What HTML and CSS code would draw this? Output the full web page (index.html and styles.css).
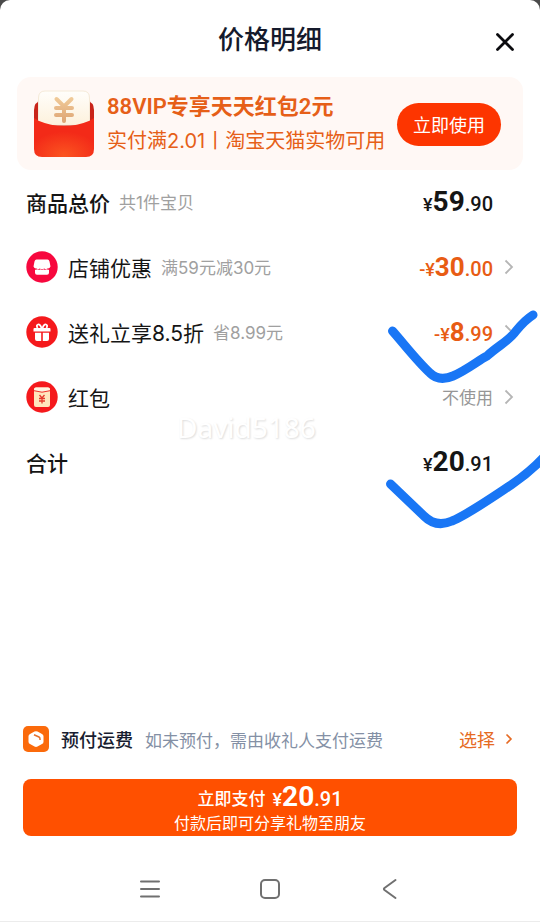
FILE: index.html
```html
<!DOCTYPE html>
<html lang="zh-CN">
<head>
<meta charset="utf-8">
<meta name="viewport" content="width=device-width, initial-scale=1">
<title>价格明细</title>
<link rel="stylesheet" href="styles.css">
</head>
<body>
<div class="sheet">
  <header class="header">
    <h1 class="title">价格明细</h1>
    <button class="close" type="button" aria-label="关闭">
      <svg width="20" height="20" viewBox="0 0 20 20"><path d="M2.500 2.500l15 15M17.500 2.500l-15 15" fill="none" stroke="#0b0b0f" stroke-width="2.800" stroke-linecap="round"/></svg>
    </button>
  </header>

  <section class="banner">
    <svg class="banner-icon" width="60" height="68" viewBox="0 0 60 68" aria-hidden="true">
      <defs>
        <radialGradient id="pocket" cx="50%" cy="95%" r="60%"><stop offset="0" stop-color="#fb5420"/><stop offset="1" stop-color="#f32a18"/></radialGradient>
        <linearGradient id="note" x1="0" y1="0" x2="0" y2="1"><stop offset="0" stop-color="#fffefb"/><stop offset="1" stop-color="#fdf1dc"/></linearGradient>
        <linearGradient id="yen" gradientUnits="userSpaceOnUse" x1="0" y1="8" x2="0" y2="33"><stop offset="0" stop-color="#f0ca98"/><stop offset="1" stop-color="#dda373"/></linearGradient>
      </defs>
      <path d="M0 20q0-8 8-10h44q8 2 8 10v18H0z" fill="#c9241a"/>
      <path d="M11 1h38q6.500 0 6.500 7v27H4.500V8q0-7 6.500-7z" fill="url(#note)" stroke="#f5ead8"/>
      <path d="M22.500 9L30 16.500 37.500 9M22 18h16M22 25h16M30 17v14" fill="none" stroke="url(#yen)" stroke-width="4" stroke-linecap="round"/>
      <path d="M0 28q4 2.500 4.500 2.700Q17 36 30 36t25.500-5.300L60 28v31q0 8-8 8H8q-8 0-8-8z" fill="url(#pocket)"/>
    </svg>
    <div class="banner-text">
      <strong class="banner-title">88VIP专享天天红包2元</strong>
      <span class="banner-sub">实付满2.01丨淘宝天猫实物可用</span>
    </div>
    <button class="use" type="button">立即使用</button>
  </section>

  <main class="list">
    <div class="row">
      <span class="name strong">商品总价</span><span class="note">共1件宝贝</span>
      <span class="price"><span class="yen">¥</span><b>59</b><span class="cents">.90</span></span>
      <span class="gap"></span>
    </div>
    <div class="row">
      <svg class="badge" width="32" height="32" viewBox="0 0 32 32" aria-hidden="true"><circle cx="16" cy="16" r="15.700" fill="#f7083e"/><path d="M10.500 8.500h11q1.500 0 2 2l1 5q-1 2.500-3.200 2-1.500 1.500-3 0-2.300 1.500-4.600 0-1.500 1.500-3 0-2.200.5-3.200-2l1-5q.5-2 2-2z" fill="#fff"/><path d="M9 18.700q1.500.3 2.500-.4 1.500 1 3 0 1.500 1 3 0 1.500 1 3 0 1 .7 2.500.4v3q0 2-2 2H11q-2 0-2-2z" fill="#fff"/></svg>
      <span class="name">店铺优惠</span><span class="note">满59元减30元</span>
      <span class="price off"><span class="yen">-¥</span><b>30</b><span class="cents">.00</span></span>
      <svg class="chevron" width="10" height="16" viewBox="0 0 10 16" aria-hidden="true"><path d="M1.500 1.500L8 8l-6.500 6.500"/></svg>
    </div>
    <div class="row">
      <svg class="badge" width="32" height="32" viewBox="0 0 32 32" aria-hidden="true"><circle cx="16" cy="16" r="15.700" fill="#f5191c"/><path d="M8.500 12h15q1 0 1 1v2.500h-17V13q0-1 1-1zM9 16.800h6.200V25H11q-2 0-2-2zM16.800 16.800H23V23q0 2-2 2h-4.200z" fill="#fff"/><path d="M15.500 12q-1.500-4-3.500-3.500T11.500 12M16.500 12q1.500-4 3.500-3.500t.5 3.500" fill="none" stroke="#fff" stroke-width="1.800"/></svg>
      <span class="name">送礼立享8.5折</span><span class="note">省8.99元</span>
      <span class="price off"><span class="yen">-¥</span><b>8</b><span class="cents">.99</span></span>
      <svg class="chevron" width="10" height="16" viewBox="0 0 10 16" aria-hidden="true"><path d="M1.500 1.500L8 8l-6.500 6.500"/></svg>
    </div>
    <div class="row">
      <svg class="badge" width="32" height="32" viewBox="0 0 32 32" aria-hidden="true"><circle cx="16" cy="16" r="15.700" fill="#f5191c"/><rect x="8" y="6.500" width="16" height="19.500" rx="2" fill="#ffe6bd"/><path d="M8 9.500V8.500q0-2 2-2h12q2 0 2 2v1q-8 3-16 0z" fill="#fff5e2"/><path d="M8 9.700q8 3 16 0" fill="none" stroke="#f0302a"/><path d="M13.500 14l2.500 3 2.500-3M13 17.500h6M13 20h6M16 17v5.500" fill="none" stroke="#e5392c" stroke-width="1.300"/></svg>
      <span class="name">红包</span>
      <span class="unused">不使用</span>
      <svg class="chevron" width="10" height="16" viewBox="0 0 10 16" aria-hidden="true"><path d="M1.500 1.500L8 8l-6.500 6.500"/></svg>
    </div>
    <div class="row">
      <span class="name strong">合计</span>
      <span class="price"><span class="yen">¥</span><b>20</b><span class="cents">.91</span></span>
      <span class="gap"></span>
    </div>
    <span class="watermark">David5186</span>
    <svg class="marks" width="160" height="230" viewBox="380 300 160 230" aria-hidden="true">
      <path d="M392.500 331C404 344 417 361 430 373Q439 382 453 376C467 370 479 360 487 356C499 345 509 341 516 331Q525 320 533 315"/>
      <path d="M390.500 484L424 516Q436 528 452 521C467 515 493 497 511 485Q530 472 544 457"/>
    </svg>
  </main>

  <footer class="footer">
    <div class="freight">
      <svg width="26" height="26" viewBox="0 0 26 26" aria-hidden="true"><rect width="26" height="26" rx="5" fill="#fb6a0b"/><path d="M11.500 5.600q1.500-.8 3 0l4.500 2.300q1.500.8 1.500 2.400v5.400q0 1.600-1.500 2.400l-4.500 2.400q-1.500.8-3 0L7 18.100q-1.500-.8-1.500-2.400v-5.400q0-1.600 1.500-2.400z" fill="#fff"/><path d="M11 8.700l5 2.300q1 .5 1 2v1" fill="none" stroke="#e5702d" stroke-width="1.500"/></svg>
      <span class="freight-name">预付运费</span>
      <span class="freight-note">如未预付，需由收礼人支付运费</span>
      <a class="choose" href="#">选择<svg width="8" height="12" viewBox="0 0 8 12" aria-hidden="true"><path d="M1.500 1.500L6 6l-4.500 4.500" fill="none" stroke="#e66a23" stroke-width="1.600"/></svg></a>
    </div>
    <button class="pay" type="button">
      <span class="pay-main"><span>立即支付</span><span class="price"><span class="yen">¥</span><b>20</b><span class="cents">.91</span></span></span>
      <span class="pay-sub">付款后即可分享礼物至朋友</span>
    </button>
  </footer>

  <nav class="nav">
    <button type="button" aria-label="最近任务"><svg width="22" height="22" viewBox="0 0 22 22"><path d="M2 3.500h18M2 11h18M2 18.500h18"/></svg></button>
    <button type="button" aria-label="主页"><svg width="22" height="22" viewBox="0 0 22 22"><rect x="2" y="2" width="18" height="18" rx="4"/></svg></button>
    <button type="button" aria-label="返回"><svg width="22" height="22" viewBox="0 0 22 22"><path d="M16.500 2L5.500 10q-1.200 1 0 2l11 8"/></svg></button>
  </nav>
</div>
</body>
</html>
```
FILE: styles.css
```css
* { box-sizing: border-box; }

body {
  margin: 0;
  background: #4a4a4a;
  font-family: Inter, "Noto Sans CJK SC", sans-serif;
  color: #151515;
}

button {
  border: 0;
  padding: 0;
  background: none;
  font: inherit;
  color: inherit;
}

svg { flex: none; display: block; }

.sheet {
  min-height: 100vh;
  display: flex;
  flex-direction: column;
  background: #fff;
  border-radius: 10px 10px 0 0;
}

.header {
  position: relative;
  height: 77px;
  padding-top: 2px;
  display: flex;
  align-items: center;
  justify-content: center;
}

.title {
  margin: 0;
  font-size: 26px;
  line-height: 36px;
  font-weight: 500;
  color: #151a2c;
}

.close {
  position: absolute;
  right: 25px;
  top: 32px;
}

.banner {
  margin: 0 17px;
  padding: 1px 22px 0 17px;
  height: 93px;
  display: flex;
  align-items: center;
  background: #fff8f5;
  border-radius: 14px;
}

.banner-text {
  flex: 1;
  margin-left: 13px;
  display: flex;
  flex-direction: column;
  white-space: nowrap;
  color: #e65f18;
}

.banner-title {
  font-family: Roboto, "Noto Sans CJK SC", sans-serif;
  font-size: 22px;
  line-height: 34px;
  font-weight: 600;
}

.banner-sub {
  font-size: 20px;
  line-height: 34px;
}

.use {
  width: 104px;
  height: 43px;
  border-radius: 22px;
  background: #fd3500;
  color: #fff;
  font-size: 18px;
}

.list {
  position: relative;
  margin-top: -1px;
  padding: 0 26px;
}

.row {
  height: 65px;
  display: flex;
  align-items: center;
  white-space: nowrap;
}

.badge { margin-right: 10px; }
.name { font-size: 21px; }
.strong { font-weight: 500; }

.note {
  margin-left: 9px;
  font-size: 17px;
  color: #a0a0a0;
}

.price {
  margin-left: auto;
  display: flex;
  align-items: baseline;
  font-family: Roboto, sans-serif;
  font-size: 20px;
  line-height: 32px;
  font-weight: 500;
}

.row .price { padding-top: 4px; }

.price b {
  font-size: 28px;
  font-weight: 700;
}

.yen { font-size: 18px; }

.off { color: #e85c14; }
.off b { font-size: 26px; }

.unused {
  margin-left: auto;
  font-size: 17px;
  color: #969696;
}

.chevron { margin-left: 11px; }

.chevron path {
  fill: none;
  stroke: #b5b5b5;
  stroke-width: 1.8;
}

.gap { width: 21px; }

.watermark {
  position: absolute;
  left: 177px;
  top: 239px;
  font-family: "Noto Sans", sans-serif;
  font-size: 28px;
  color: #fff;
  text-shadow: 1px 1px 2px #ddd;
}

.marks {
  position: absolute;
  right: 0;
  top: 131px;
}

.marks path {
  fill: none;
  stroke: #1976f5;
  stroke-width: 9;
  stroke-linecap: round;
  stroke-linejoin: round;
}

.footer {
  margin-top: auto;
  padding: 0 23px;
}

.freight {
  height: 80px;
  display: flex;
  align-items: center;
  white-space: nowrap;
}

.freight-name {
  margin-left: 12px;
  font-size: 18px;
  font-weight: 500;
  color: #181d30;
}

.freight-note {
  margin-left: 12px;
  font-size: 17px;
  color: #8490a5;
}

.choose {
  margin-left: auto;
  margin-right: 4px;
  display: flex;
  align-items: center;
  gap: 10px;
  font-size: 18px;
  color: #e66a23;
  text-decoration: none;
}

.pay {
  width: 100%;
  height: 57px;
  display: flex;
  flex-direction: column;
  align-items: center;
  justify-content: center;
  border-radius: 8px;
  background: #ff5000;
  color: #fff;
}

.pay-main {
  display: flex;
  align-items: center;
  gap: 7px;
  font-size: 17px;
  line-height: 26px;
  font-weight: 500;
}

.pay .price { line-height: 28px; }

.pay-sub {
  font-size: 16px;
  line-height: 18px;
}

.nav {
  height: 86px;
  padding: 20px 90px 0;
  display: flex;
  border-bottom: 1px solid #ececec;
}

.nav button {
  flex: 1;
  height: 66px;
  display: flex;
  align-items: center;
  justify-content: center;
}

.nav svg {
  fill: none;
  stroke: #707070;
  stroke-width: 2;
  stroke-linecap: round;
}
```
